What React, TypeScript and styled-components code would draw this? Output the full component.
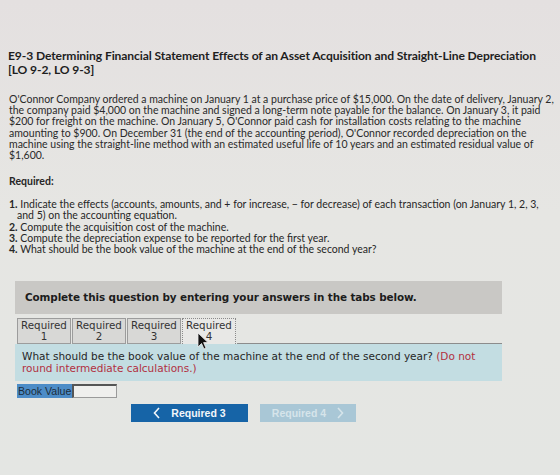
import React from 'react';
import styled, { createGlobalStyle } from 'styled-components';

const GlobalStyle = createGlobalStyle`
  html, body {
    margin: 0;
    padding: 0;
    background: #e6e4e2;
  }
  body {
    font-family: 'Lato', 'Liberation Sans', sans-serif;
    color: #262626;
  }
`;

const TABS = ['1', '2', '3', '4'];

const App = () => {
  return (
    <Page>
      <GlobalStyle />
      <Title>
        E9-3 Determining Financial Statement Effects of an Asset Acquisition and Straight-Line Depreciation
        <br />
        [LO 9-2, LO 9-3]
      </Title>

      <Body>
        O'Connor Company ordered a machine on January 1 at a purchase price of $15,000. On the date of delivery, January 2,
        <br />
        the company paid $4,000 on the machine and signed a long-term note payable for the balance. On January 3, it paid
        <br />
        $200 for freight on the machine. On January 5, O'Connor paid cash for installation costs relating to the machine
        <br />
        amounting to $900. On December 31 (the end of the accounting period), O'Connor recorded depreciation on the
        <br />
        machine using the straight-line method with an estimated useful life of 10 years and an estimated residual value of
        <br />
        $1,600.
      </Body>

      <RequiredLabel>Required:</RequiredLabel>

      <List>
        <li>
          <b>1.</b> Indicate the effects (accounts, amounts, and + for increase, − for decrease) of each transaction (on January 1, 2, 3,
          <br />
          and 5) on the accounting equation.
        </li>
        <li>
          <b>2.</b> Compute the acquisition cost of the machine.
        </li>
        <li>
          <b>3.</b> Compute the depreciation expense to be reported for the first year.
        </li>
        <li>
          <b>4.</b> What should be the book value of the machine at the end of the second year?
        </li>
      </List>

      <Panel>
        <Banner>Complete this question by entering your answers in the tabs below.</Banner>

        <TabRow>
          {TABS.map((n) => (
            <Tab key={n} $active={n === '4'}>
              Required
              <br />
              {n}
            </Tab>
          ))}
          <TabRule />
          <Cursor viewBox="0 0 12 18" width="12" height="18">
            <path d="M1 1 L1 15 L4.5 11.5 L7 17 L9 16 L6.6 10.6 L11 10.6 Z" fill="#111" stroke="#eee" strokeWidth="0.8" />
          </Cursor>
        </TabRow>

        <Question>
          What should be the book value of the machine at the end of the second year? <Note>(Do not
          round intermediate calculations.)</Note>
        </Question>

        <AnswerRow>
          <AnswerLabel>Book Value</AnswerLabel>
          <AnswerInput type="text" />
        </AnswerRow>

        <NavRow>
          <NavButton>
            <Chevron viewBox="0 0 8 12" width="8" height="12">
              <path d="M6 1 L1.5 6 L6 11" fill="none" stroke="currentColor" strokeWidth="1.6" />
            </Chevron>
            Required 3
          </NavButton>
          <NavButton $disabled>
            Required 4
            <Chevron viewBox="0 0 8 12" width="8" height="12">
              <path d="M2 1 L6.5 6 L2 11" fill="none" stroke="currentColor" strokeWidth="1.6" />
            </Chevron>
          </NavButton>
        </NavRow>
      </Panel>
    </Page>
  );
};

export default App;

const Page = styled.div`
  width: 560px;
  height: 475px;
  box-sizing: border-box;
  padding: 49px 0 0 8px;
  overflow: hidden;
  background: linear-gradient(180deg, #e4e0e0 0%, #e6e6e3 45%, #e4e6e3 100%);
`;

const Title = styled.h2`
  margin: 0;
  font-size: 12.1px;
  line-height: 14px;
  font-weight: 700;
  color: #1e1e1e;
  letter-spacing: -0.1px;
`;

const Body = styled.p`
  margin: 17px 0 0 1px;
  font-size: 10.5px;
  line-height: 11.2px;
  color: #2a2a2a;
  white-space: nowrap;
`;

const RequiredLabel = styled.div`
  margin: 14px 0 0 1px;
  font-size: 10.5px;
  font-weight: 700;
  line-height: 12px;
`;

const List = styled.ol`
  list-style: none;
  margin: 12px 0 0 1px;
  padding: 0;
  font-size: 10.5px;
  line-height: 11.2px;
  white-space: nowrap;

  li {
    padding-left: 8px;
    text-indent: -8px;
  }
`;

const Panel = styled.div`
  margin: 26px 0 0 7px;
  width: 487px;
  font-family: 'DejaVu Sans', Verdana, sans-serif;
`;

const Banner = styled.div`
  background: #c9c8c5;
  padding: 10px 10px 11px;
  font-size: 10.4px;
  line-height: 12px;
  font-weight: 700;
  color: #1c1c1c;
  letter-spacing: -0.1px;
`;

const TabRow = styled.div`
  position: relative;
  display: flex;
  align-items: flex-end;
  margin: 4px 0 0 2px;
`;

const Tab = styled.div<{ $active?: boolean }>`
  width: 54px;
  height: 26px;
  margin-right: 1px;
  box-sizing: border-box;
  border: 1px ${({ $active }) => ($active ? 'dotted #8a8a8a' : 'solid #9c9c9c')};
  border-bottom: ${({ $active }) => ($active ? 'none' : '1px solid #9c9c9c')};
  background: ${({ $active }) => ($active ? '#e8e8e6' : '#d8d8d6')};
  font-size: 10.3px;
  line-height: 11px;
  text-align: center;
  color: #333;
  padding-top: 1px;
`;

const TabRule = styled.div`
  flex: 1;
  border-bottom: 1px solid #8c8c8c;
`;

const Cursor = styled.svg`
  position: absolute;
  left: 180px;
  top: 14px;
`;

const Question = styled.div`
  background: #c3dde2;
  padding: 6px 7px 7px;
  font-size: 10.5px;
  line-height: 12px;
  color: #262626;
`;

const Note = styled.span`
  color: #b2303f;
`;

const AnswerRow = styled.div`
  display: flex;
  align-items: stretch;
  margin: 3px 0 0 2px;
  height: 14px;
`;

const AnswerLabel = styled.div`
  background: #4d8cc7;
  color: #1d2c3a;
  font-family: 'Liberation Sans', Arial, sans-serif;
  font-size: 10.6px;
  line-height: 14px;
  padding: 0 1px;
`;

const AnswerInput = styled.input`
  width: 45px;
  height: 14px;
  box-sizing: border-box;
  margin: 0;
  border: 1px solid #9a9a9a;
  border-top: 2px solid #555;
  border-left: 2px solid #555;
  background: #efefed;
  padding: 0;
`;

const NavRow = styled.div`
  display: flex;
  gap: 12px;
  margin: 6px 0 0 116px;
`;

const NavButton = styled.div<{ $disabled?: boolean }>`
  display: flex;
  align-items: center;
  justify-content: center;
  gap: 10px;
  width: ${({ $disabled }) => ($disabled ? '96px' : '117px')};
  height: 18px;
  background: ${({ $disabled }) => ($disabled ? '#a9c7d6' : '#1664a7')};
  color: ${({ $disabled }) => ($disabled ? '#d6e4ea' : '#f2f6fa')};
  font-family: 'Liberation Sans', Arial, sans-serif;
  font-size: 10.5px;
  font-weight: 700;
`;

const Chevron = styled.svg`
  display: block;
`;
